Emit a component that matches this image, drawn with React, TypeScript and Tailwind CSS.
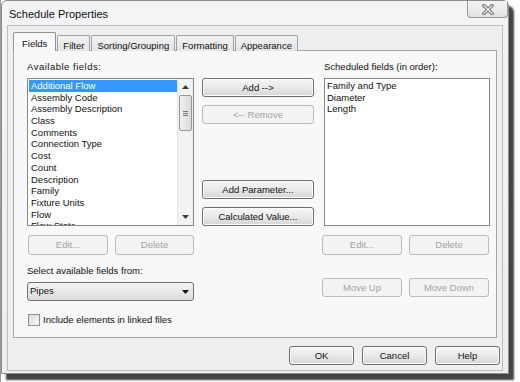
import React from 'react';

const font = { fontFamily: '"Liberation Sans", Arial, sans-serif' };

const available = [
  'Additional Flow',
  'Assembly Code',
  'Assembly Description',
  'Class',
  'Comments',
  'Connection Type',
  'Cost',
  'Count',
  'Description',
  'Family',
  'Fixture Units',
  'Flow',
  'Flow State',
];

const scheduled = ['Family and Type', 'Diameter', 'Length'];

type BtnProps = {
  label: string;
  w: string;
  disabled?: boolean;
  className?: string;
};

const Btn: React.FC<BtnProps> = ({ label, w, disabled, className = '' }) => (
  <div
    className={`${w} h-[19px] flex items-center justify-center rounded-[3px] border text-[9.5px] leading-none ${
      disabled
        ? 'border-[#b8bcbf] bg-[#f3f3f3] text-[#a3a3a3]'
        : 'border-[#6f6f6f] bg-gradient-to-b from-[#f6f6f6] via-[#e9e9e9] to-[#d6d6d6] text-[#111] shadow-[inset_0_0_0_1px_#fcfcfc]'
    } ${className}`}
  >
    {label}
  </div>
);

const Scrollbar: React.FC = () => (
  <div className="w-[16px] h-full bg-[#f3f3f3] border-l border-[#e6e6e6] flex flex-col items-center">
    <div className="h-[16px] flex items-center justify-center">
      <svg width="7" height="4" viewBox="0 0 7 4">
        <path d="M0 4 L3.5 0 L7 4 Z" fill="#3a3a3a" />
      </svg>
    </div>
    <div className="w-[13px] h-[36px] rounded-[2px] border border-[#959595] bg-gradient-to-r from-[#f2f2f2] to-[#d9d9d9] flex flex-col items-center justify-center gap-[1px]">
      <div className="w-[5px] h-px bg-[#777]" />
      <div className="w-[5px] h-px bg-[#777]" />
      <div className="w-[5px] h-px bg-[#777]" />
    </div>
    <div className="flex-1" />
    <div className="h-[16px] flex items-center justify-center">
      <svg width="7" height="4" viewBox="0 0 7 4">
        <path d="M0 0 L7 0 L3.5 4 Z" fill="#3a3a3a" />
      </svg>
    </div>
  </div>
);

export default function App() {
  return (
    <div className="w-[520px] h-[382px] bg-white overflow-hidden flex" style={font}>
      {/* sliver of whatever sits behind the dialog */}
      <div className="w-[1px] h-full bg-[#9a9a9a]" />
      <div className="w-[508px] h-[374px] rounded-t-[6px] border border-[#8c8c8c] bg-gradient-to-b from-[#f3f4f5] to-[#eceeef] shadow-[5px_6px_2px_rgba(35,35,35,0.85)] flex flex-col">
        {/* title bar */}
        <div className="h-[24px] flex items-start justify-between">
          <div className="pl-[7px] pt-[7px] text-[11px] leading-[13px] text-[#111]">Schedule Properties</div>
          <div className="w-[41px] h-[17px] rounded-b-[4px] border border-t-0 border-[#9a9a9a] bg-gradient-to-b from-[#f5f5f5] to-[#e2e2e2] flex items-center justify-center">
            <svg width="12" height="11" viewBox="0 0 12 11">
              <path d="M2 1.5 L10 9.5 M10 1.5 L2 9.5" stroke="#7a7a7a" strokeWidth="3.4" strokeLinecap="square" />
              <path d="M2 1.5 L10 9.5 M10 1.5 L2 9.5" stroke="#f2f2f2" strokeWidth="1.2" strokeLinecap="square" />
            </svg>
          </div>
        </div>

        {/* client area */}
        <div className="mx-[5px] h-[346px] border border-[#bdbdbd] bg-[#efefef] flex flex-col pl-[5px]">
          {/* tabs */}
          <div className="mt-[6px] h-[19px] flex items-end relative z-10 text-[9.5px] text-[#111]">
            <div className="h-[19px] px-[8px] pt-[4px] border border-b-0 border-[#8d9199] bg-[#f8f8f8] rounded-t-[2px]">
              Fields
            </div>
            {['Filter', 'Sorting/Grouping', 'Formatting', 'Appearance'].map((t) => (
              <div
                key={t}
                className="ml-[1px] h-[16px] px-[5px] pt-[3px] border border-b-0 border-[#9da1a8] bg-gradient-to-b from-[#f2f2f2] to-[#e4e4e4] rounded-t-[2px]"
              >
                {t}
              </div>
            ))}
          </div>

          {/* tab panel */}
          <div className="-mt-px mr-[5px] h-[288px] border border-[#a2a6ad] bg-[#f8f8f8] flex pl-[13px] text-[9.5px] text-[#111]">
            {/* left column */}
            <div className="w-[167px] flex flex-col">
              <div className="mt-[10px] h-[12px] leading-[12px] tracking-[0.5px]">Available fields:</div>
              <div className="mt-[5px] h-[148px] border border-[#828790] bg-white flex overflow-hidden">
                <div className="flex-1 pt-px pl-px overflow-hidden">
                  {available.map((f, i) => (
                    <div
                      key={f}
                      className={`h-[11.7px] leading-[11.7px] pl-[2px] whitespace-nowrap ${
                        i === 0 ? 'bg-[#3399ff] text-white' : ''
                      }`}
                    >
                      {f}
                    </div>
                  ))}
                </div>
                <Scrollbar />
              </div>
              <div className="mt-[9px] ml-[1px] flex gap-[7px]">
                <Btn label="Edit..." w="w-[80px]" disabled className="h-[20px]" />
                <Btn label="Delete" w="w-[79px]" disabled className="h-[20px]" />
              </div>
              <div className="mt-[10px] h-[12px] leading-[12px]">Select available fields from:</div>
              <div className="mt-[5px] h-[19px] rounded-[3px] border border-[#707070] bg-gradient-to-b from-[#f4f4f4] to-[#dcdcdc] flex items-center justify-between pl-[2px] pr-[4px]">
                <span>Pipes</span>
                <svg width="7" height="4" viewBox="0 0 7 4">
                  <path d="M0 0 L7 0 L3.5 4 Z" fill="#111" />
                </svg>
              </div>
              <div className="mt-[13px] ml-[1px] flex items-center gap-[3px]">
                <div className="w-[12px] h-[12px] border border-[#8e8f8f] bg-gradient-to-br from-[#dcdcdc] to-[#f8f8f8]" />
                <span className="leading-[12px]">Include elements in linked files</span>
              </div>
            </div>

            {/* middle column */}
            <div className="ml-[8px] w-[112px] flex flex-col">
              <Btn label="Add -->" w="w-[112px]" className="mt-[27px]" />
              <Btn label="<-- Remove" w="w-[112px]" disabled className="mt-[8px]" />
              <Btn label="Add Parameter..." w="w-[112px]" className="mt-[56px]" />
              <Btn label="Calculated Value..." w="w-[112px]" className="mt-[8px]" />
            </div>

            {/* right column */}
            <div className="ml-[10px] w-[166px] flex flex-col">
              <div className="mt-[10px] h-[12px] leading-[12px]">Scheduled fields (in order):</div>
              <div className="mt-[5px] h-[148px] border border-[#828790] bg-white pt-px pl-[2px]">
                {scheduled.map((f) => (
                  <div key={f} className="h-[11.7px] leading-[11.7px] whitespace-nowrap">
                    {f}
                  </div>
                ))}
              </div>
              <div className="mt-[9px] -ml-[2px] flex gap-[7px]">
                <Btn label="Edit..." w="w-[80px]" disabled className="h-[20px]" />
                <Btn label="Delete" w="w-[80px]" disabled className="h-[20px]" />
              </div>
              <div className="mt-[23px] -ml-[2px] flex gap-[7px]">
                <Btn label="Move Up" w="w-[80px]" disabled />
                <Btn label="Move Down" w="w-[80px]" disabled />
              </div>
            </div>
          </div>

          {/* dialog buttons */}
          <div className="mt-[8px] mr-[2px] flex justify-end gap-[8px]">
            <Btn label="OK" w="w-[65px]" />
            <Btn label="Cancel" w="w-[65px]" />
            <Btn label="Help" w="w-[65px]" />
          </div>
        </div>
      </div>
    </div>
  );
}
